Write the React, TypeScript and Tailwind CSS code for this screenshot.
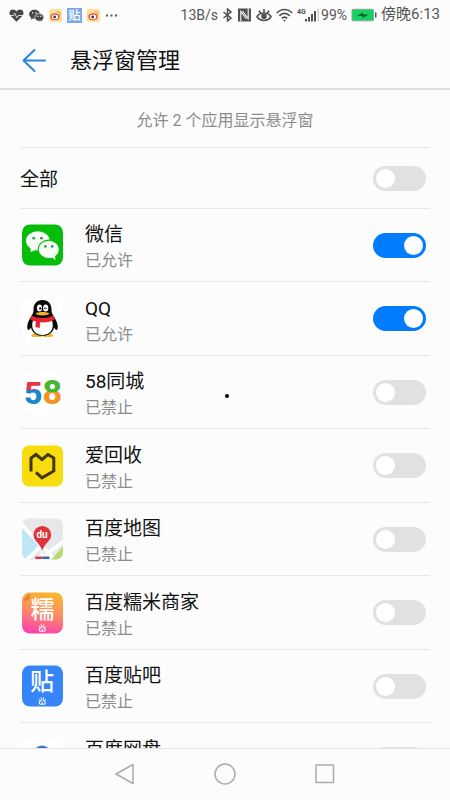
import { type ReactNode, useId, useState } from "react";

type AppEntry = {
  allowed: boolean;
  icon: ReactNode;
  name: string;
};

const cjkFont = "'Noto Sans CJK SC', sans-serif";

function WeChatIcon() {
  return (
    <svg aria-hidden="true" className="size-11 shrink-0" viewBox="0 0 44 44">
      <rect fill="#05bd0a" height="41" rx="8" width="41" x="2" y="1.5" />
      <path d="M10.5 24.5 10.8 29.2 16 26.5z" fill="#f6fbf6" />
      <ellipse cx="17.8" cy="17.8" fill="#f6fbf6" rx="11.8" ry="9.6" />
      <ellipse cx="28.8" cy="26.3" fill="#f6fbf6" rx="10.6" ry="9.2" stroke="#05bd0a" strokeWidth="1.1" />
      <path d="M31 34 35.6 37 34.8 31.5z" fill="#f6fbf6" />
      <g fill="#2f9a4c">
        <circle cx="13.7" cy="15.2" r="1.4" />
        <circle cx="21.4" cy="15.2" r="1.4" />
        <circle cx="25.4" cy="23.4" r="1.3" />
        <circle cx="32.2" cy="23.4" r="1.3" />
      </g>
    </svg>
  );
}

function QQIcon() {
  return (
    <svg aria-hidden="true" className="size-11 shrink-0" viewBox="0 0 44 44">
      <rect fill="#fff" height="41" rx="8" width="41" x="2" y="1.5" />
      <path d="M13.5 37c-3 .3-3 3 1 3h6l1.8-1 1.8 1h6c4 0 4-2.700 1-3z" fill="#f3b72c" />
      <path
        d="M22.500 3c-5.800 0-9 4-9 9.500 0 2-.2 3.300-1.200 5-2.700 4.300-5.100 8.600-5.100 12.300 0 2.200.6 3.300 1.200 3.200.8-.1 1.800-1.200 2.600-2.600.8 4.600 5.100 8.400 11.500 8.400s10.700-3.800 11.500-8.400c.8 1.400 1.800 2.500 2.600 2.600.6.1 1.200-1 1.200-3.200 0-3.700-2.400-8-5.100-12.300-1-1.700-1.200-3-1.200-5 0-5.500-3.200-9.500-9-9.500z"
        fill="#0b0b0d"
      />
      <path d="M13.800 22h17.400c1.400 2.500 1.800 5 1.500 7.600-.5 4.800-4.300 8.400-10.200 8.400s-9.700-3.600-10.200-8.400c-.3-2.600.1-5.100 1.500-7.600z" fill="#fff" />
      <path d="M11.500 18.600c3 1.700 6.700 2.500 11 2.500s8-.8 11-2.500l1.400 3.800c-3.200 2-7.400 3-12.400 3-.9 0-1.700 0-2.500-.1l-.3 5.700-4.300-1 .4-5.600c-2.100-.4-4.100-1.100-5.700-2z" fill="#e3232d" />
      <ellipse cx="19.500" cy="11" fill="#fff" rx="2.600" ry="3.500" />
      <ellipse cx="25.700" cy="11" fill="#fff" rx="2.600" ry="3.500" />
      <circle cx="20.300" cy="11.400" fill="#0b0b0d" r="1.200" />
      <path d="M24.200 12c.3-1.500 2-1.500 2.400 0" fill="none" stroke="#0b0b0d" strokeWidth="0.9" />
      <path d="M15.500 16.600c2.500-2 11.500-2 14 0-1.800 2.500-12.200 2.500-14 0z" fill="#f5b22a" />
    </svg>
  );
}

function FiveEightIcon() {
  return (
    <svg aria-hidden="true" className="size-11 shrink-0" viewBox="0 0 44 44">
      <defs>
        <linearGradient gradientUnits="userSpaceOnUse" id="five" x1="0" x2="0" y1="0" y2="44">
          <stop offset="46%" stopColor="#e8344a" />
          <stop offset="46%" stopColor="#1a86cc" />
        </linearGradient>
        <linearGradient gradientUnits="userSpaceOnUse" id="eight" x1="0" x2="0" y1="0" y2="44">
          <stop offset="49%" stopColor="#4cb52f" />
          <stop offset="49%" stopColor="#f39322" />
        </linearGradient>
      </defs>
      <rect fill="#fff" height="41" rx="8" width="41" x="2" y="1.5" />
      <text fontFamily="Roboto, sans-serif" fontWeight="800" x="4" y="34">
        <tspan fill="url(#five)" fontSize="32">5</tspan>
        <tspan fill="url(#eight)" fontSize="34">8</tspan>
      </text>
    </svg>
  );
}

function AihuishouIcon() {
  return (
    <svg aria-hidden="true" className="size-11 shrink-0" viewBox="0 0 44 44">
      <rect fill="#f8dc0e" height="41" rx="7" width="41" x="2" y="1.5" />
      <path
        d="M11 27.500V14l5-3.500 6 5 6-5 5.800 3.500v13L22 33.800l-6-5.500"
        fill="none"
        stroke="#40380e"
        strokeWidth="3"
      />
    </svg>
  );
}

function BaiduMapIcon() {
  return (
    <svg aria-hidden="true" className="size-11 shrink-0" viewBox="0 0 44 44">
      <defs>
        <clipPath id="map-tile">
          <rect height="41" rx="7" width="41" x="2" y="1.5" />
        </clipPath>
      </defs>
      <g clipPath="url(#map-tile)">
        <path d="M0 0h44v44H0z" fill="#e6e7e9" />
        <path d="M0 8 22 31 10 44H0z" fill="#bfe6f6" />
        <path d="M0 6 38 46M44 24 16 46M6 44 21 29" fill="none" stroke="#fff" strokeWidth="4" />
        <path d="M44 28.500V38l-6 6h-8z" fill="#b4dd6c" />
        <path d="M16 30 22 34.500 17 41h11z" fill="#fff" />
        <path d="M15.300 39.500h7V42h-7z" fill="#d93a42" />
        <path d="M22.300 39.500h7V42h-7z" fill="#3a68b8" />
      </g>
      <path d="M22.300 9a8.900 8.900 0 0 1 8.900 8.900c0 5.300-5.400 7.300-8.900 15.300-3.500-8-8.900-10-8.900-15.300A8.900 8.900 0 0 1 22.300 9z" fill="#e0343a" />
      <text fill="#fff" fontFamily="Roboto, sans-serif" fontSize="10" fontWeight="700" textAnchor="middle" x="22" y="21">du</text>
    </svg>
  );
}

function Paw() {
  return (
    <g fill="none" stroke="#fff" strokeWidth="1.100">
      <path d="M22.300 35.800c1.300 0 3 1.900 3 3.200 0 1.500-1.700 1.300-3 1.300s-3 .2-3-1.300c0-1.300 1.700-3.200 3-3.200z" />
      <path d="M19.300 35.200v1.400M21.200 33.500v1.400M23.500 33.500v1.400M25.400 35.200v1.400M22.300 38v2" />
    </g>
  );
}

function NuomiIcon() {
  return (
    <svg aria-hidden="true" className="size-11 shrink-0" viewBox="0 0 44 44">
      <defs>
        <linearGradient id="nuomi" x1="0.600" x2="0.400" y1="0" y2="1">
          <stop offset="0%" stopColor="#fbb52e" />
          <stop offset="45%" stopColor="#fb9060" />
          <stop offset="100%" stopColor="#fb42ae" />
        </linearGradient>
      </defs>
      <rect fill="url(#nuomi)" height="41" rx="8" width="41" x="2" y="1.5" />
      <path d="M4 9.500 9.500 3.500M6.500 9.500l3-3.200" stroke="#d9773a" strokeWidth="1.400" />
      <text fill="#fff" fontFamily={cjkFont} fontSize="24" fontWeight="500" textAnchor="middle" x="22.500" y="27">糯</text>
      <Paw />
    </svg>
  );
}

function TiebaIcon() {
  return (
    <svg aria-hidden="true" className="size-11 shrink-0" viewBox="0 0 44 44">
      <rect fill="#3585f8" height="41" rx="8" width="41" x="2" y="1.5" />
      <text fill="#fff" fontFamily={cjkFont} fontSize="24" fontWeight="500" textAnchor="middle" x="22" y="26">贴</text>
      <Paw />
    </svg>
  );
}

function NetdiskIcon() {
  return (
    <svg aria-hidden="true" className="size-11 shrink-0" viewBox="0 0 44 44">
      <rect fill="#fff" height="41" rx="8" width="41" x="2" y="1.5" />
      <circle cx="22" cy="16.500" fill="none" r="6.500" stroke="#3c78c8" strokeWidth="5" />
      <circle cx="13" cy="28" fill="none" r="6.500" stroke="#3c78c8" strokeWidth="5" />
      <circle cx="31" cy="28" fill="none" r="6.500" stroke="#e24b4b" strokeWidth="5" />
    </svg>
  );
}

const apps: AppEntry[] = [
  { allowed: true, icon: <WeChatIcon />, name: "微信" },
  { allowed: true, icon: <QQIcon />, name: "QQ" },
  { allowed: false, icon: <FiveEightIcon />, name: "58同城" },
  { allowed: false, icon: <AihuishouIcon />, name: "爱回收" },
  { allowed: false, icon: <BaiduMapIcon />, name: "百度地图" },
  { allowed: false, icon: <NuomiIcon />, name: "百度糯米商家" },
  { allowed: false, icon: <TiebaIcon />, name: "百度贴吧" },
  { allowed: false, icon: <NetdiskIcon />, name: "百度网盘" },
];

function WeiboBadge() {
  return (
    <svg aria-hidden="true" className="size-[13px]" viewBox="0 0 13 13">
      <rect fill="#fbdf9c" height="13" rx="2" width="13" />
      <ellipse cx="6" cy="7.700" fill="#d9503f" rx="4.600" ry="3.500" />
      <ellipse cx="6" cy="7.900" fill="#fff" rx="3.200" ry="2.300" />
      <circle cx="5.700" cy="8" fill="#5a3030" r="1.400" />
      <path d="M7.800 2.800c2-.3 3.300 1 3 3" fill="none" stroke="#e58a2e" />
    </svg>
  );
}

function StatusBar() {
  return (
    <div className="flex h-[30px] shrink-0 items-center justify-between pr-2.5 pl-[9px] text-sm text-[#555]">
      <div className="flex items-center gap-[5px]">
        <svg aria-hidden="true" className="h-[13px] w-[15px]" viewBox="0 0 15 13">
          <path d="M7.500 12.800 1.500 6.800C-.5 4.500.6.500 4 .500c1.500 0 2.700.7 3.500 2 .8-1.300 2-2 3.500-2 3.400 0 4.500 4 2.500 6.300z" fill="#484848" />
          <path d="M.5 6.500h4l1.300-2.300 2 4.600 1.500-2.300h5" fill="none" stroke="#fcfcfc" strokeWidth="0.800" />
        </svg>
        <svg aria-hidden="true" className="h-[13px] w-[15px]" viewBox="0 0 15 13">
          <path d="M5.500.8c3 0 5.400 2 5.400 4.500S8.500 9.800 5.500 9.800c-.6 0-1.200-.1-1.700-.2L1.800 10.700l.4-1.900C.9 8 .1 6.700.1 5.300.1 2.800 2.500.8 5.500.8z" fill="#484848" />
          <path d="M10.300 4.600c2.500 0 4.500 1.700 4.500 3.800 0 1.200-.7 2.200-1.700 2.900l.3 1.500-1.700-.8c-.4.1-.9.2-1.400.2-2.500 0-4.500-1.700-4.500-3.800s2-3.800 4.500-3.800z" fill="#484848" stroke="#fcfcfc" strokeWidth="0.700" />
          <path d="M3 3.800h1.300M6.500 3.800h1.300M8.300 7.300h1.100M11.200 7.300h1.100" stroke="#fcfcfc" strokeWidth="1.200" />
        </svg>
        <WeiboBadge />
        <svg aria-hidden="true" className="size-[15px] overflow-visible" viewBox="0 0 15 15">
          <rect fill="#7ea9e6" height="15" width="15" />
          <text fill="#fff" fontFamily={cjkFont} fontSize="12" fontWeight="500" textAnchor="middle" x="7.500" y="12">贴</text>
        </svg>
        <WeiboBadge />
        <svg aria-hidden="true" className="h-[3px] w-[13px]" viewBox="0 0 13 3">
          <path d="M1 .5h2v2H1zM5.500.5h2v2h-2zM10 .5h2v2h-2z" fill="#555" />
        </svg>
      </div>

      <div className="flex items-center gap-1 whitespace-nowrap">
        <span>13B/s</span>
        <svg aria-hidden="true" className="h-[14px] w-[11px]" fill="none" stroke="#505050" strokeWidth="1.500" viewBox="0 0 11 14">
          <path d="M1.500 4 9 10 5.500 13V1L9 4 1.500 10" />
        </svg>
        <svg aria-hidden="true" className="h-[14px] w-[15px]" viewBox="0 0 15 14">
          <path d="M1 .5h13v13H1z" fill="#505050" />
          <path d="M3.800 13.500V3.500L9.500 11M11.200.5v10L5.500 3" fill="none" stroke="#fcfcfc" strokeWidth="1.100" />
        </svg>
        <svg aria-hidden="true" className="h-[14px] w-[16px]" fill="none" stroke="#505050" strokeWidth="1.600" viewBox="0 0 16 14">
          <path d="M1 8.500c3-4.600 11-4.600 14 0-3 5.300-11 5.300-14 0zM8 1v3M3 2.500l1.600 2.700M13 2.500l-1.600 2.700" />
          <circle cx="8" cy="8.300" fill="#505050" r="2" />
        </svg>
        <svg aria-hidden="true" className="h-[14px] w-[17px]" fill="none" stroke="#505050" strokeWidth="1.700" viewBox="0 0 17 14">
          <path d="M.8 5c4.400-4.700 11-4.700 15.400 0M3.300 7.800c3-3.200 7.400-3.200 10.400 0M5.800 10.300c1.600-1.700 3.800-1.700 5.400 0" />
          <circle cx="8.500" cy="12.500" fill="#505050" r="1" stroke="none" />
        </svg>
        <svg aria-hidden="true" className="h-4 w-[24px]" viewBox="0 0 24 16">
          <text fill="#505050" fontFamily="Roboto, sans-serif" fontSize="7" fontWeight="700" x="0" y="7">4G</text>
          <path d="M8 12h2v2.500H8zM11 10h2v4.500h-2zM14 7h2v7.500h-2zM17 4h2v10.500h-2z" fill="#505050" />
          <path d="M20.500 2h1.500v12.500h-1.500z" fill="#cfcfcf" />
        </svg>
        <span className="-ml-1">99%</span>
        <svg aria-hidden="true" className="h-[14px] w-[26px]" viewBox="0 0 26 14">
          <rect fill="#14d264" height="11.500" rx="1" stroke="#8aa894" width="21.500" x="1" y="1.300" />
          <path d="M6 7.800 12 4.500v2h5.500l-6 3.500V8z" fill="#14582f" />
          <path d="M24 4.500h1.500v5H24z" fill="#505050" />
        </svg>
        <span className="text-[15px]">傍晚6:13</span>
      </div>
    </div>
  );
}

type SwitchProps = {
  checked: boolean;
  id: string;
  onChange: (checked: boolean) => void;
};

function Switch({ checked, id, onChange }: SwitchProps) {
  return (
    <input
      checked={checked}
      className="h-[25px] w-[53px] shrink-0 cursor-pointer appearance-none rounded-full bg-[#e1e1e1] p-[3px] before:block before:size-[19px] before:rounded-full before:bg-white before:content-[''] checked:bg-[#007dfe] checked:before:ml-7"
      id={id}
      onChange={(event) => onChange(event.target.checked)}
      role="switch"
      type="checkbox"
    />
  );
}

type AppRowProps = {
  app: AppEntry;
  onChange: (allowed: boolean) => void;
};

function AppRow({ app, onChange }: AppRowProps) {
  const id = useId();

  return (
    <li className="flex items-center gap-[21px] border-b border-[#e6e6e6] pr-1 odd:h-[73px] even:h-[74px]">
      {app.icon}
      <label className="min-w-0 flex-1 pt-1" htmlFor={id}>
        <span className="block text-[19px] leading-7 text-[#111]">{app.name}</span>
        <span className="block text-base leading-6 text-[#8c8c8c]">
          {app.allowed ? "已允许" : "已禁止"}
        </span>
      </label>
      <Switch checked={app.allowed} id={id} onChange={onChange} />
    </li>
  );
}

export default function App() {
  const [entries, setEntries] = useState(apps);
  const allowedCount = entries.filter((entry) => entry.allowed).length;

  function setAllowed(name: string, allowed: boolean) {
    setEntries((current) =>
      current.map((entry) => (entry.name === name ? { ...entry, allowed } : entry)),
    );
  }

  function setAll(allowed: boolean) {
    setEntries((current) => current.map((entry) => ({ ...entry, allowed })));
  }

  return (
    <div className="relative flex h-dvh flex-col bg-[#fcfcfc] font-[Roboto,'Noto_Sans_CJK_SC',sans-serif]">
      <StatusBar />

      <header className="flex h-[60px] shrink-0 items-center gap-6 border-b-2 border-[#dedede] pt-1 pl-[22px]">
        <button aria-label="返回" type="button">
          <svg aria-hidden="true" className="size-6" fill="none" stroke="#2a86e0" strokeLinecap="round" strokeLinejoin="round" strokeWidth="2" viewBox="0 0 24 24">
            <path d="M12.500 1 1.500 11.500l11 10.500M1.500 11.500h21.500" />
          </svg>
        </button>
        <h1 className="text-[22px] leading-8 text-[#111]">悬浮窗管理</h1>
      </header>

      <main className="min-h-0 flex-1 overflow-hidden px-5">
        <p className="flex h-[58px] items-center justify-center border-b border-[#e6e6e6] pt-1 text-base text-[#8c8c8c]">
          允许 {allowedCount} 个应用显示悬浮窗
        </p>
        <div className="flex h-[61px] items-center justify-between border-b border-[#e6e6e6] pr-1">
          <label className="pt-1 text-[19px] leading-7 text-[#111]" htmlFor="allow-all">全部</label>
          <Switch
            checked={allowedCount === entries.length}
            id="allow-all"
            onChange={setAll}
          />
        </div>
        <ul>
          {entries.map((entry) => (
            <AppRow
              app={entry}
              key={entry.name}
              onChange={(allowed) => setAllowed(entry.name, allowed)}
            />
          ))}
        </ul>
      </main>

      <nav className="flex h-[52px] shrink-0 items-center justify-center border-t border-[#e4e4e4] pb-0.5">
        <button aria-label="后退" className="flex w-25 justify-center" type="button">
          <svg aria-hidden="true" className="size-6" fill="none" stroke="#ababab" strokeLinejoin="round" strokeWidth="1.500" viewBox="0 0 24 24">
            <path d="M20 2.500v19L3 12z" />
          </svg>
        </button>
        <button aria-label="主屏幕" className="flex w-25 justify-center" type="button">
          <svg aria-hidden="true" className="size-6" fill="none" stroke="#ababab" strokeWidth="1.500" viewBox="0 0 24 24">
            <circle cx="12" cy="12" r="10" />
          </svg>
        </button>
        <button aria-label="最近任务" className="flex w-25 justify-center" type="button">
          <svg aria-hidden="true" className="size-6" fill="none" stroke="#ababab" strokeLinejoin="round" strokeWidth="1.500" viewBox="0 0 24 24">
            <path d="M3 3h17.500v17.500H3z" />
          </svg>
        </button>
      </nav>

      {/* touch pointer */}
      <span className="absolute top-[394px] left-1/2 size-1 rounded-full bg-black" />
    </div>
  );
}
